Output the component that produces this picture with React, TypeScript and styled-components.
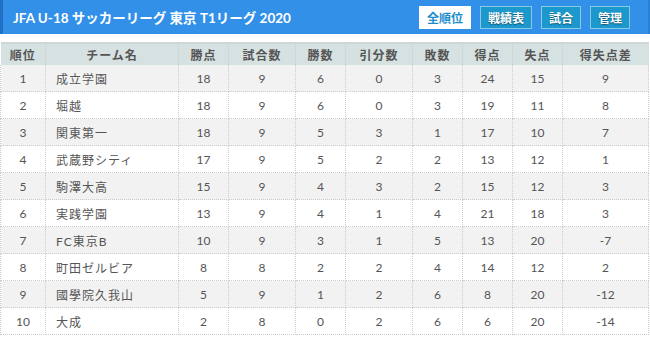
import React from "react";
import styled, { createGlobalStyle } from "styled-components";

const GlobalStyle = createGlobalStyle`
    html, body {
        margin: 0;
        padding: 0;
        background: #ffffff;
    }
    body {
        font-family: "Lato", "Noto Sans CJK JP", sans-serif;
    }
`;

interface Standing {
    rank: number;
    team: string;
    points: number;
    played: number;
    won: number;
    drawn: number;
    lost: number;
    goalsFor: number;
    goalsAgainst: number;
    diff: number;
}

const standings: Standing[] = [
    { rank: 1, team: "成立学園", points: 18, played: 9, won: 6, drawn: 0, lost: 3, goalsFor: 24, goalsAgainst: 15, diff: 9 },
    { rank: 2, team: "堀越", points: 18, played: 9, won: 6, drawn: 0, lost: 3, goalsFor: 19, goalsAgainst: 11, diff: 8 },
    { rank: 3, team: "関東第一", points: 18, played: 9, won: 5, drawn: 3, lost: 1, goalsFor: 17, goalsAgainst: 10, diff: 7 },
    { rank: 4, team: "武蔵野シティ", points: 17, played: 9, won: 5, drawn: 2, lost: 2, goalsFor: 13, goalsAgainst: 12, diff: 1 },
    { rank: 5, team: "駒澤大高", points: 15, played: 9, won: 4, drawn: 3, lost: 2, goalsFor: 15, goalsAgainst: 12, diff: 3 },
    { rank: 6, team: "実践学園", points: 13, played: 9, won: 4, drawn: 1, lost: 4, goalsFor: 21, goalsAgainst: 18, diff: 3 },
    { rank: 7, team: "FC東京B", points: 10, played: 9, won: 3, drawn: 1, lost: 5, goalsFor: 13, goalsAgainst: 20, diff: -7 },
    { rank: 8, team: "町田ゼルビア", points: 8, played: 8, won: 2, drawn: 2, lost: 4, goalsFor: 14, goalsAgainst: 12, diff: 2 },
    { rank: 9, team: "國學院久我山", points: 5, played: 9, won: 1, drawn: 2, lost: 6, goalsFor: 8, goalsAgainst: 20, diff: -12 },
    { rank: 10, team: "大成", points: 2, played: 8, won: 0, drawn: 2, lost: 6, goalsFor: 6, goalsAgainst: 20, diff: -14 },
];

const columns = [
    { label: "順位", width: 45 },
    { label: "チーム名", width: 133 },
    { label: "勝点", width: 50 },
    { label: "試合数", width: 67 },
    { label: "勝数", width: 50 },
    { label: "引分数", width: 67 },
    { label: "敗数", width: 50 },
    { label: "得点", width: 50 },
    { label: "失点", width: 50 },
    { label: "得失点差", width: 86 },
];

const Page = styled.div`
    width: 650px;
`;

const TitleBar = styled.header`
    height: 34px;
    display: flex;
    align-items: center;
    justify-content: space-between;
    padding: 0 18px 0 10px;
    box-sizing: border-box;
    background: #3290e8;
    border-left: 3px solid #1f70c4;
    border-right: 2px solid #2a80d6;
`;

const Title = styled.h1`
    margin: 0;
    font-size: 13.5px;
    font-weight: 700;
    color: #ffffff;
`;

const Nav = styled.nav`
    display: flex;
    gap: 9px;
`;

const NavButton = styled.button<{ $active?: boolean }>`
    height: 23px;
    padding: 0 7px;
    border: 1px solid ${(p) => (p.$active ? "#ffffff" : "#86c9e8")};
    background: ${(p) => (p.$active ? "#ffffff" : "#1c98cc")};
    color: ${(p) => (p.$active ? "#1c8ccd" : "#ffffff")};
    font-family: "Lato", "Noto Sans CJK JP", sans-serif;
    font-size: 12px;
    font-weight: 700;
    text-shadow: ${(p) => (p.$active ? "none" : "0 1px 1px rgba(0, 0, 0, 0.45)")};
    cursor: pointer;
`;

const Table = styled.table`
    margin-top: 8px;
    width: 648px;
    border-collapse: collapse;
    table-layout: fixed;
    border-top: 2px solid #cfd6d6;
    font-size: 12px;
    color: #555555;
`;

const HeadCell = styled.th`
    height: 21px;
    padding: 0;
    background: #d6e1e1;
    font-weight: 700;
    font-size: 12px;
    color: #555555;
    text-align: center;
    letter-spacing: 1px;
    border-left: 1px dotted #c4cccc;
    &:first-child {
        border-left: none;
    }
`;

const Row = styled.tr<{ $odd: boolean }>`
    background: ${(p) => (p.$odd ? "#f2f2f2" : "#ffffff")};
`;

const Cell = styled.td<{ $left?: boolean }>`
    height: 26px;
    padding: 0 0 0 ${(p) => (p.$left ? "10px" : "0")};
    text-align: ${(p) => (p.$left ? "left" : "center")};
    border-left: 1px dotted #cccccc;
    border-right: 1px dotted #cccccc;
    border-bottom: 1px dotted #cccccc;
    letter-spacing: ${(p) => (p.$left ? "1px" : "0")};
`;

export default function App() {
    return (
        <Page>
            <GlobalStyle />
            <TitleBar>
                <Title>JFA U-18 サッカーリーグ 東京 T1リーグ 2020</Title>
                <Nav>
                    <NavButton $active>全順位</NavButton>
                    <NavButton>戦績表</NavButton>
                    <NavButton>試合</NavButton>
                    <NavButton>管理</NavButton>
                </Nav>
            </TitleBar>
            <Table>
                <colgroup>
                    {columns.map((c) => (
                        <col key={c.label} style={{ width: c.width }} />
                    ))}
                </colgroup>
                <thead>
                    <tr>
                        {columns.map((c) => (
                            <HeadCell key={c.label}>{c.label}</HeadCell>
                        ))}
                    </tr>
                </thead>
                <tbody>
                    {standings.map((s, idx) => (
                        <Row key={s.rank} $odd={idx % 2 === 0}>
                            <Cell>{s.rank}</Cell>
                            <Cell $left>{s.team}</Cell>
                            <Cell>{s.points}</Cell>
                            <Cell>{s.played}</Cell>
                            <Cell>{s.won}</Cell>
                            <Cell>{s.drawn}</Cell>
                            <Cell>{s.lost}</Cell>
                            <Cell>{s.goalsFor}</Cell>
                            <Cell>{s.goalsAgainst}</Cell>
                            <Cell>{s.diff}</Cell>
                        </Row>
                    ))}
                </tbody>
            </Table>
        </Page>
    );
}
